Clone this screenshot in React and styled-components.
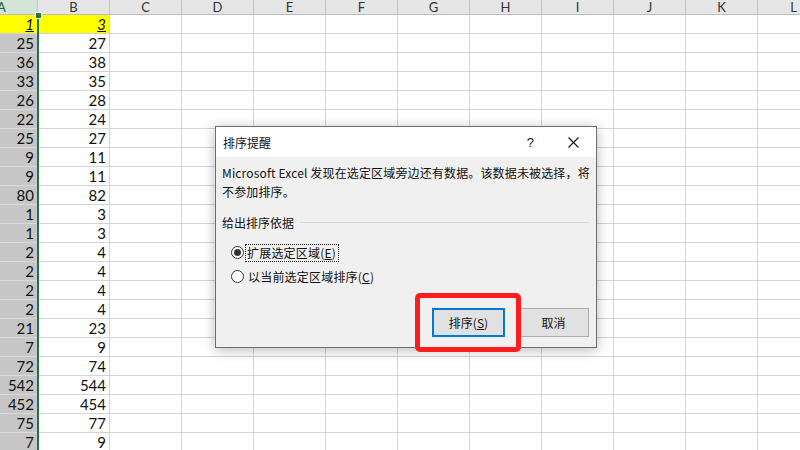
import React from "react";
import styled, { createGlobalStyle } from "styled-components";

const rows = [
	[1, 3],
	[25, 27],
	[36, 38],
	[33, 35],
	[26, 28],
	[22, 24],
	[25, 27],
	[9, 11],
	[9, 11],
	[80, 82],
	[1, 3],
	[1, 3],
	[2, 4],
	[2, 4],
	[2, 4],
	[2, 4],
	[21, 23],
	[7, 9],
	[72, 74],
	[542, 544],
	[452, 454],
	[75, 77],
	[7, 9],
];

const letters = ["A", "B", "C", "D", "E", "F", "G", "H", "I", "J", "K", "L"];

const Global = createGlobalStyle`
	html, body {
		margin: 0;
		padding: 0;
		background: #ffffff;
		overflow: hidden;
	}
	body {
		width: 800px;
		height: 450px;
		font-family: Lato, "Liberation Sans", sans-serif;
	}
`;

class App extends React.Component {
	render() {
		return (
			<Screen>
				<Global />
				<Sheet>
					{letters.map((l, i) => (
						<HeadCell key={l} selected={i === 0}>
							{l}
						</HeadCell>
					))}
					{rows.map((r, ri) =>
						letters.map((l, ci) => (
							<Cell
								key={l + ri}
								col={ci}
								yellow={ri === 0 && ci < 2}
								marked={ri === 0}
							>
								{ci < 2 ? r[ci] : ""}
							</Cell>
						))
					)}
				</Sheet>
				<SelEdge />
				<Handle />

				<Dialog>
					<TitleBar>
						<Title>排序提醒</Title>
						<TitleBtns>
							<Help>?</Help>
							<svg width="11" height="11" viewBox="0 0 11 11">
								<path d="M0.5 0.5 L10.5 10.5 M10.5 0.5 L0.5 10.5" stroke="#111" strokeWidth="1.1" />
							</svg>
						</TitleBtns>
					</TitleBar>
					<Body>
						<Message>
							Microsoft Excel 发现在选定区域旁边还有数据。该数据未被选择，将
							<br />
							不参加排序。
						</Message>
						<GroupHead>
							<span>给出排序依据</span>
							<Rule />
						</GroupHead>
						<RadioRow>
							<Radio checked />
							<Focus>
								扩展选定区域(<u>E</u>)
							</Focus>
						</RadioRow>
						<RadioRow second>
							<Radio />
							<Label>
								以当前选定区域排序(<u>C</u>)
							</Label>
						</RadioRow>
						<Buttons>
							<Button primary>
								排序(<u>S</u>)
							</Button>
							<Button>取消</Button>
						</Buttons>
					</Body>
				</Dialog>
				<RedMark />
			</Screen>
		);
	}
}

export default App;

const Screen = styled.div`
	position: relative;
	width: 800px;
	height: 450px;
	overflow: hidden;
	background: #fff;
`;

const Sheet = styled.div`
	display: grid;
	grid-template-columns: repeat(12, 72px);
	grid-auto-rows: 19px;
	grid-template-rows: 15px;
	margin-left: -34px;
`;

const HeadCell = styled.div`
	box-sizing: border-box;
	height: 15px;
	background: ${(p) => (p.selected ? "#d3e4d9" : "#e6e6e6")};
	border-right: 1px solid #c4c4c4;
	border-bottom: 1px solid #bdbdbd;
	color: ${(p) => (p.selected ? "#1f5f3c" : "#333")};
	font-size: 13px;
	line-height: 14px;
	text-align: center;
`;

const Cell = styled.div`
	box-sizing: border-box;
	height: 19px;
	border-right: 1px solid #d4d4d4;
	border-bottom: 1px solid #d4d4d4;
	background: ${(p) => (p.yellow ? "#ffff00" : p.col === 0 ? "#c6c6c6" : "#fff")};
	border-bottom-color: ${(p) => (p.col === 0 && !p.yellow ? "#dadada" : "#d4d4d4")};
	text-align: right;
	padding-right: 3px;
	font-size: 15px;
	line-height: 19px;
	color: #111;
	font-style: ${(p) => (p.marked ? "italic" : "normal")};
	text-decoration: ${(p) => (p.marked ? "underline" : "none")};
`;

const SelEdge = styled.div`
	position: absolute;
	left: 37px;
	top: 15px;
	width: 2px;
	bottom: 0;
	background: #217346;
`;

const Handle = styled.div`
	position: absolute;
	left: 35px;
	top: 12px;
	width: 5px;
	height: 5px;
	background: #217346;
	border: 1px solid #fff;
`;

const Dialog = styled.div`
	position: absolute;
	left: 215px;
	top: 126px;
	width: 382px;
	height: 222px;
	box-sizing: border-box;
	border: 1px solid #6e6e6e;
	background: #f0f0f0;
	box-shadow: 0 2px 12px rgba(0, 0, 0, 0.28);
	font-family: "Noto Sans CJK SC", "Noto Sans", sans-serif;
	font-size: 12px;
	color: #111;
	display: flex;
	flex-direction: column;
`;

const TitleBar = styled.div`
	height: 30px;
	background: #fff;
	display: flex;
	align-items: center;
	justify-content: space-between;
	padding: 0 17px 0 7px;
`;

const Title = styled.div`
	font-size: 12px;
`;

const TitleBtns = styled.div`
	display: flex;
	align-items: center;
	gap: 34px;
`;

const Help = styled.span`
	font-family: "Liberation Sans", sans-serif;
	font-size: 13px;
`;

const Body = styled.div`
	flex: 1;
	padding: 6px 6px 0 6px;
	display: flex;
	flex-direction: column;
`;

const Message = styled.div`
	line-height: 19px;
	white-space: nowrap;
	letter-spacing: 0.15px;
`;

const GroupHead = styled.div`
	display: flex;
	align-items: center;
	margin-top: 12px;
	height: 19px;
`;

const Rule = styled.div`
	flex: 1;
	height: 1px;
	background: #d9d9d9;
	margin: 0 0 0 6px;
`;

const RadioRow = styled.div`
	display: flex;
	align-items: center;
	height: 19px;
	margin-top: ${(p) => (p.second ? "5px" : "11px")};
	padding-left: 9px;
	gap: 3px;
`;

const Radio = styled.span`
	box-sizing: border-box;
	width: 13px;
	height: 13px;
	border-radius: 50%;
	border: 1px solid #333;
	background: #fff;
	display: flex;
	align-items: center;
	justify-content: center;

	&::after {
		content: "";
		width: 7px;
		height: 7px;
		border-radius: 50%;
		background: ${(p) => (p.checked ? "#333" : "transparent")};
	}
`;

const Label = styled.span`
	padding: 1px 1px;
	line-height: 16px;
	letter-spacing: 0.2px;
`;

const Focus = styled(Label)`
	outline: 1px dotted #222;
	outline-offset: 0;
	padding: 0 2px 0 1px;
	margin-left: -1px;
`;

const Buttons = styled.div`
	display: flex;
	justify-content: flex-end;
	gap: 13px;
	margin-top: 22px;
	padding-right: 1px;
`;

const Button = styled.div`
	box-sizing: border-box;
	width: ${(p) => (p.primary ? "73px" : "71px")};
	height: 29px;
	background: #e1e1e1;
	border: ${(p) => (p.primary ? "2px solid #0078d7" : "1px solid #adadad")};
	display: flex;
	align-items: center;
	justify-content: center;
	font-size: 12px;
`;

const RedMark = styled.div`
	position: absolute;
	left: 415px;
	top: 293px;
	width: 106px;
	height: 59px;
	box-sizing: border-box;
	border: 5px solid #ff1c1c;
	border-radius: 5px;
`;
